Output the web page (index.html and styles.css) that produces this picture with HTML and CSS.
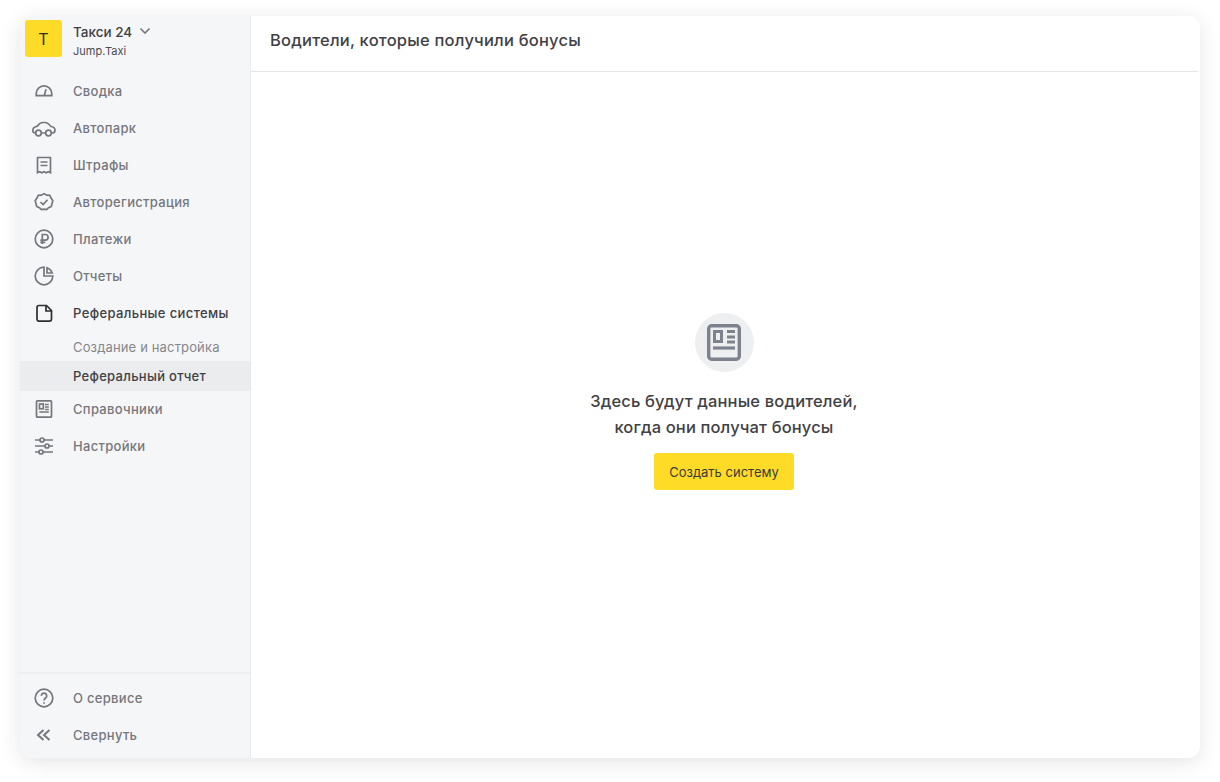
FILE: index.html
```html
<!DOCTYPE html>
<html lang="ru">
<head>
<meta charset="utf-8">
<title>Реферальный отчет</title>
<link rel="stylesheet" href="styles.css">
</head>
<body>
<div class="window">
  <aside class="sidebar">
    <div class="brand">
      <div class="logo">Т</div>
      <div class="brand-text">
        <div class="brand-name">Такси 24
          <svg class="chev" width="12" height="8" viewBox="0 0 12 8"><path d="M1.5 1.5 6 6l4.500-4.500" fill="none" stroke="#75777c" stroke-width="1.6"/></svg>
        </div>
        <div class="brand-sub">Jump.Taxi</div>
      </div>
    </div>
    <nav class="nav">
      <a class="item"><span class="ico"><svg width="24" height="24" viewBox="0 0 24 24" class="i"><path d="M4.200 16.700v-2a7.800 7.800 0 0 1 15.600 0v2z"/><path d="m12.400 16.200 1.600-6"/></svg></span>Сводка</a>
      <a class="item"><span class="ico"><svg width="24" height="24" viewBox="0 0 24 24" class="i wide"><path d="M3.700 17H3C1.500 17 .8 15.500.8 14c0-1.500 1-2.500 2.200-3l2.500-1C7 7.500 9 6.500 11 6.500h2c2.500 0 4 1.500 6 4 2 .3 4 1.500 4 3.500 0 1.700-1 3-2.500 3h-1.200M9.300 17h4.400"/><circle cx="6.500" cy="17" r="2.800"/><circle cx="16.500" cy="17" r="2.800"/></svg></span>Автопарк</a>
      <a class="item"><span class="ico"><svg width="24" height="24" viewBox="0 0 24 24" class="i"><path d="M5.500 4.500h13v15.200l-2.200-1-2.100 1-2.200-1-2.200 1-2.100-1-2.200 1z"/><path d="M8.500 9h7M8.500 12.500h7"/></svg></span>Штрафы</a>
      <a class="item"><span class="ico"><svg width="24" height="24" viewBox="-1.600 -1.600 27.200 27.200" class="i scaled"><path d="m12 2.500 3 1.700 3.500.3 1.500 3 2 3-.9 3.200-.8 3.300-3 1.500-2.300 2-3-.5-3 .5-2.300-2-3-1.500-.8-3.300-.9-3.200 2-3 1.500-3 3.500-.3z"/><path d="m8 12 3 3 5-5.500"/></svg></span>Авторегистрация</a>
      <a class="item"><span class="ico"><svg width="24" height="24" viewBox="0 0 24 24" class="i"><circle cx="12" cy="12" r="8.800"/><path d="M10.300 17V7.500h3a2.800 2.800 0 0 1 0 5.600H8.300M8.300 15.300h5"/></svg></span>Платежи</a>
      <a class="item"><span class="ico"><svg width="24" height="24" viewBox="0 0 24 24" class="i"><path d="M12 3.200A8.800 8.800 0 1 0 20.800 12H12z"/><path d="M15 3.800A8.800 8.800 0 0 1 20.200 9H15z"/></svg></span>Отчеты</a>
      <a class="item current"><span class="ico"><svg width="24" height="24" viewBox="0 0 24 24" class="i dark"><path d="M7 4.500h7.500L19.500 9.500v8.500a2.200 2.200 0 0 1-2.200 2.200H7.200A2.200 2.200 0 0 1 5 18V6.500a2 2 0 0 1 2-2z"/><path d="M14 4.500V10h5.500"/></svg></span>Реферальные системы</a>
      <a class="sub">Создание и настройка</a>
      <a class="sub active">Реферальный отчет</a>
      <a class="item"><span class="ico"><svg width="24" height="24" viewBox="0 0 24 24" class="i"><rect x="4.500" y="3.800" width="15" height="16.400" rx=".8"/><rect x="7.500" y="7" width="3.800" height="4.800"/><path d="M13 7.500h3.800M13 10h3.800M13 12.500h3.800M7.300 15h9.500"/></svg></span>Справочники</a>
      <a class="item"><span class="ico"><svg width="24" height="24" viewBox="0 0 24 24" class="i"><path d="M3 6h5M12 6h9M3 12h10M17 12h4M3 18h4M11 18h10"/><circle cx="10" cy="6" r="2"/><circle cx="15" cy="12" r="2"/><circle cx="9" cy="18" r="2"/></svg></span>Настройки</a>
    </nav>
    <div class="foot">
      <a class="item"><span class="ico"><svg width="24" height="24" viewBox="0 0 24 24" class="i"><circle cx="12" cy="12" r="8.800"/><path d="M9.300 9.800a2.700 2.700 0 1 1 4.400 2.100c-1 .8-1.700 1.300-1.700 2.600"/><path d="M12 16.200v1.600"/></svg></span>О сервисе</a>
      <a class="item"><span class="ico"><svg width="24" height="24" viewBox="0 0 24 24" class="i bold"><path d="m11.500 7-5.500 5 5.500 5M17.500 7 12 12l5.500 5"/></svg></span>Свернуть</a>
    </div>
  </aside>
  <main class="main">
    <header class="head"><h1 class="title">Водители, которые получили бонусы</h1></header>
    <section class="empty">
      <div class="badge">
        <svg width="34" height="37" viewBox="0 0 34 37"><rect x="1.700" y="1.700" width="30.600" height="33.600" rx="3" fill="none" stroke="#7d828d" stroke-width="3.400"/><rect x="7.500" y="7.500" width="7" height="10" fill="none" stroke="#7d828d" stroke-width="3"/><path d="M20 7.500h8M20 13h8M20 18h8" stroke="#7d828d" stroke-width="2.800" fill="none"/><path d="M6 24h22" stroke="#7d828d" stroke-width="3.200" fill="none"/></svg>
      </div>
      <p class="msg">Здесь будут данные водителей,<br>когда они получат бонусы</p>
      <button class="btn" type="button">Создать систему</button>
    </section>
  </main>
</div>
</body>
</html>
```
FILE: styles.css
```css
* { box-sizing: border-box; }
html, body { height: 100%; }
body {
  margin: 0;
  padding: 16px 20px 24px;
  background: #fff;
  font-family: Inter, "Noto Sans", sans-serif;
  overflow: hidden;
}
.window {
  display: flex;
  height: 742px;
  background: #fff;
  border-radius: 12px;
  overflow: hidden;
  box-shadow: 0 4px 20px rgba(40, 44, 56, .12);
}
.sidebar {
  width: 231px;
  flex: none;
  display: flex;
  flex-direction: column;
  background: #f5f6f8;
  border-right: 1px solid #e9eaec;
}
.brand {
  display: flex;
  gap: 11px;
  height: 56.500px;
  padding: 4px 5px 0;
}
.logo {
  width: 37px;
  height: 37px;
  border-radius: 3px;
  background: #fedb26;
  color: #2d2e30;
  display: flex;
  align-items: center;
  justify-content: center;
  font-size: 16px;
}
.brand-name {
  margin-top: 4px;
  font-size: 13.500px;
  line-height: 17px;
  font-weight: 500;
  color: #3f4144;
  display: flex;
  align-items: center;
  gap: 7px;
}
.chev { margin-top: -3px; }
.brand-sub {
  margin-top: 2px;
  font-size: 11px;
  line-height: 16px;
  color: #4a4c50;
}
.nav { flex: 1; }
.item {
  display: flex;
  align-items: center;
  height: 37px;
  padding-left: 11px;
  font-size: 13px;
  font-weight: 500;
  letter-spacing: .3px;
  color: #75777c;
}
.ico {
  width: 25px;
  height: 24px;
  margin-right: 17px;
  display: flex;
  justify-content: center;
  flex: none;
}
.i {
  fill: none;
  stroke: #75777c;
  stroke-width: 1.700;
}
.i.wide { overflow: visible; }
.i.scaled { stroke-width: 1.900; }
.i.bold { stroke-width: 2; }
.i.dark { stroke: #2d2e30; }
.current { color: #3f4144; letter-spacing: .37px; }
.sub {
  display: flex;
  align-items: center;
  height: 29.500px;
  padding: 1px 0 0 53px;
  font-size: 13px;
  letter-spacing: .15px;
  color: #85878b;
}
.sub.active {
  padding-top: 0;
  background: #ebecee;
  color: #3f4144;
  font-weight: 500;
  letter-spacing: .3px;
}
.foot {
  border-top: 2px solid #eeeff1;
  padding: 6px 0 4.500px;
}
.main {
  flex: 1;
  display: flex;
  flex-direction: column;
  padding-right: 2px;
}
.head {
  height: 56px;
  border-bottom: 1px solid #e4e5e7;
  padding: 14px 0 0 19px;
}
.title {
  margin: 0;
  font-size: 16.500px;
  line-height: 20px;
  letter-spacing: .22px;
  font-weight: 500;
  color: #3f4144;
}
.empty {
  flex: 1;
  display: flex;
  flex-direction: column;
  align-items: center;
  padding: 241px 1px 0 0;
}
.badge {
  width: 59px;
  height: 59px;
  border-radius: 50%;
  background: #eeeff1;
  display: flex;
  align-items: center;
  justify-content: center;
}
.msg {
  margin: 16px 0 0;
  text-align: center;
  font-size: 16.500px;
  line-height: 26px;
  letter-spacing: .15px;
  font-weight: 500;
  color: #3f4144;
}
.btn {
  margin-top: 13px;
  width: 140px;
  height: 37px;
  border: 0;
  border-radius: 3px;
  background: #fedb26;
  color: #3a3b3e;
  font-family: inherit;
  font-size: 13px;
}
```
